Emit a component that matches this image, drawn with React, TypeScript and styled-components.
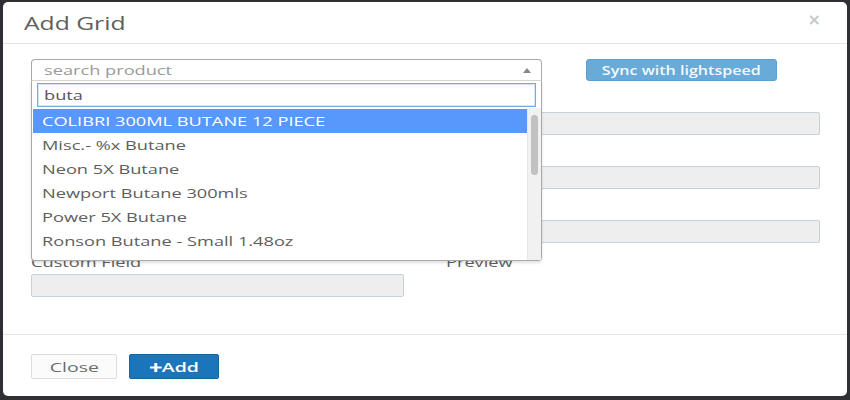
import React, { useState } from 'react';
import styled, { createGlobalStyle } from 'styled-components';

const GlobalStyle = createGlobalStyle`
  html, body {
    margin: 0;
    padding: 0;
    background: #2e3033;
    font-family: 'Open Sans', 'Liberation Sans', sans-serif;
  }
`;

// the reference shot is stretched sideways, so glyphs are too
const Wide = styled.span<{ $origin?: string; $scale?: number }>`
  display: inline-block;
  white-space: nowrap;
  transform: scaleX(${(p) => p.$scale || 1.4});
  transform-origin: ${(p) => p.$origin || 'left'} center;
`;

const Modal = styled.div`
  margin: 2px 3px 0 3px;
  height: 394px;
  background: #fff;
  border-radius: 5px;
  display: flex;
  flex-direction: column;
  overflow: hidden;
`;

const Header = styled.div`
  height: 41px;
  border-bottom: 1px solid #e5e5e5;
  padding: 0 26px 0 21px;
  display: flex;
  align-items: center;
  justify-content: space-between;
`;

const Title = styled.h4`
  margin: 0;
  font-size: 18px;
  font-weight: 400;
  color: #606060;
  line-height: 20px;
`;

const CloseX = styled.button`
  border: none;
  background: none;
  padding: 0;
  margin-top: -6px;
  font-size: 16px;
  line-height: 16px;
  color: #c8c8c8;
  font-weight: 700;
  font-family: 'DejaVu Sans', sans-serif;
  cursor: pointer;
`;

const Body = styled.div`
  flex: 1;
  padding: 15px 27px 0 28px;
`;

const TopRow = styled.div`
  position: relative;
  display: flex;
  align-items: flex-start;
  height: 22px;
`;

const SelectBox = styled.div`
  box-sizing: border-box;
  width: 511px;
  height: 22px;
  border: 1px solid #a9a9a9;
  border-bottom-color: #d5d5d5;
  border-radius: 4px 4px 0 0;
  padding-left: 12px;
  display: flex;
  align-items: center;
  justify-content: space-between;
  font-size: 13px;
  color: #9a9a9a;
`;

const Arrow = styled.span`
  width: 0;
  height: 0;
  margin-right: 10px;
  border-left: 4px solid transparent;
  border-right: 4px solid transparent;
  border-bottom: 5px solid #888;
`;

const SyncButton = styled.button`
  box-sizing: border-box;
  margin-left: 44px;
  width: 191px;
  height: 22px;
  padding: 0;
  background: #68aad8;
  border: 1px solid #5b9dcb;
  border-radius: 3px;
  color: #f4f8fb;
  font-family: inherit;
  font-size: 12px;
  font-weight: 600;
`;

const Dropdown = styled.div`
  position: absolute;
  top: 22px;
  left: 0;
  box-sizing: border-box;
  width: 511px;
  height: 180px;
  background: #fff;
  border: 1px solid #a9a9a9;
  border-top: none;
  border-radius: 0 0 4px 4px;
  box-shadow: 0 2px 3px rgba(0, 0, 0, 0.12);
  z-index: 5;
`;

const SearchWrap = styled.div`
  padding: 2px 5px 1px 5px;
`;

const Search = styled.div`
  box-sizing: border-box;
  height: 24px;
  border: 1px solid #7aa7e8;
  box-shadow: inset 0 0 0 1px #d6e4f8;
  padding-left: 6px;
  display: flex;
  align-items: center;
  font-size: 13px;
  color: #555;
`;

const Results = styled.div`
  display: flex;
  height: 152px;
  overflow: hidden;
`;

const List = styled.ul`
  flex: 1;
  list-style: none;
  margin: 0;
  padding: 1px 0 0 1px;
`;

const Item = styled.li<{ $active?: boolean }>`
  height: 24px;
  padding-left: 9px;
  display: flex;
  align-items: center;
  font-size: 13px;
  color: ${(p) => (p.$active ? '#fff' : '#5e5e5e')};
  background: ${(p) => (p.$active ? '#5897fb' : 'transparent')};
`;

const Track = styled.div`
  width: 13px;
  background: #f1f1f1;
  border-left: 1px solid #e6e6e6;
  padding-top: 7px;
  display: flex;
  justify-content: center;
`;

const Thumb = styled.div`
  width: 7px;
  height: 60px;
  border-radius: 4px;
  background: #c1c1c1;
`;

const Fields = styled.div`
  display: grid;
  grid-template-columns: 373px 374px;
  column-gap: 42px;
  row-gap: 10px;
  margin-top: 10px;
`;

const Field = styled.div`
  display: flex;
  flex-direction: column;
`;

const Label = styled.label`
  height: 18px;
  line-height: 18px;
  margin-bottom: 3px;
  font-size: 13px;
  color: #606060;
`;

const Input = styled.input`
  box-sizing: border-box;
  height: 23px;
  border: 1px solid #c8d0da;
  border-radius: 2px;
  background: #eeeeee;
  font-family: inherit;
  font-size: 13px;
  padding: 0 8px;
`;

const Footer = styled.div`
  border-top: 1px solid #e5e5e5;
  padding: 19px 28px 17px 28px;
  display: flex;
  gap: 12px;
`;

const Button = styled.button<{ $primary?: boolean }>`
  box-sizing: border-box;
  height: 25px;
  width: ${(p) => (p.$primary ? '90px' : '86px')};
  padding: 0;
  display: flex;
  align-items: center;
  justify-content: center;
  border-radius: 2px;
  border: 1px solid ${(p) => (p.$primary ? '#15669f' : '#d9dde2')};
  background: ${(p) => (p.$primary ? '#1b75bb' : '#fbfbfb')};
  color: ${(p) => (p.$primary ? '#fff' : '#6b6b6b')};
  font-family: inherit;
  font-size: 13px;
  font-weight: ${(p) => (p.$primary ? 600 : 400)};
`;

const PlusIcon = () => (
  <svg width="8" height="9" viewBox="0 0 8 9">
    <path d="M3 0h2v3.5h3v2H5V9H3V5.5H0v-2h3z" fill="#fff" />
  </svg>
);

const products = [
  'COLIBRI 300ML BUTANE 12 PIECE',
  'Misc.- %x Butane',
  'Neon 5X Butane',
  'Newport Butane 300mls',
  'Power 5X Butane',
  'Ronson Butane - Small 1.48oz',
];

// the first three rows sit under the open dropdown, their labels unseen
const fieldRows: [string, string][] = [
  ['', ''],
  ['', ''],
  ['', ''],
  ['Custom Field', 'Preview'],
];

const App: React.FC = () => {
  const [active] = useState(0);

  return (
    <>
      <GlobalStyle />
      <Modal>
        <Header>
          <Title>
            <Wide $scale={1.37}>Add Grid</Wide>
          </Title>
          <CloseX>×</CloseX>
        </Header>
        <Body>
          <TopRow>
            <SelectBox>
              <Wide>search product</Wide>
              <Arrow />
            </SelectBox>
            <SyncButton>
              <Wide $origin="center" $scale={1.34}>
                Sync with lightspeed
              </Wide>
            </SyncButton>
            <Dropdown>
              <SearchWrap>
                <Search>
                  <Wide>buta</Wide>
                </Search>
              </SearchWrap>
              <Results>
                <List>
                  {products.map((p, i) => (
                    <Item key={p} $active={i === active}>
                      <Wide>{p}</Wide>
                    </Item>
                  ))}
                </List>
                <Track>
                  <Thumb />
                </Track>
              </Results>
            </Dropdown>
          </TopRow>
          <Fields>
            {fieldRows.map(([left, right], i) => (
              <React.Fragment key={i}>
                <Field>
                  <Label>
                    <Wide>{left}</Wide>
                  </Label>
                  <Input disabled={i < 3} />
                </Field>
                <Field>
                  <Label>
                    <Wide>{right}</Wide>
                  </Label>
                  {i < 3 && <Input disabled />}
                </Field>
              </React.Fragment>
            ))}
          </Fields>
        </Body>
        <Footer>
          <Button>
            <Wide $origin="center" $scale={1.5}>
              Close
            </Wide>
          </Button>
          <Button $primary>
            <Wide $origin="center" $scale={1.5}>
              <PlusIcon />
              Add
            </Wide>
          </Button>
        </Footer>
      </Modal>
    </>
  );
};

export default App;
